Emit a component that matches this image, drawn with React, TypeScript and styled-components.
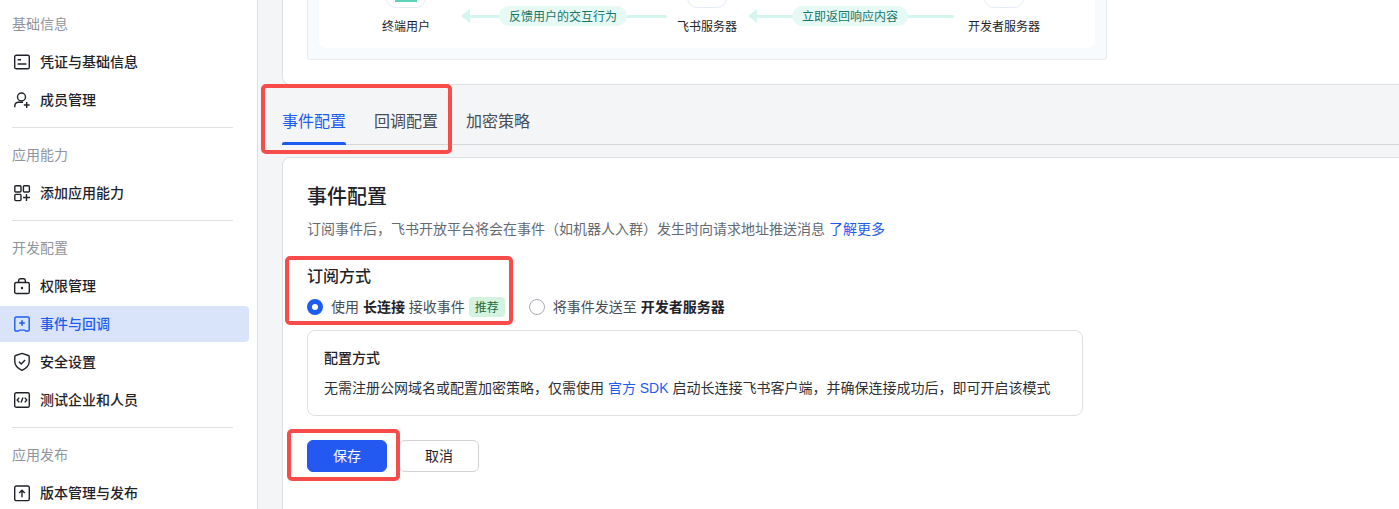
import React from "react";
import styled, { createGlobalStyle } from "styled-components";

const Global = createGlobalStyle`
  html, body { margin: 0; padding: 0; background: #fff; }
  body { font-family: "Liberation Sans", "Noto Sans CJK SC", sans-serif; color: #1f2329; }
  * { box-sizing: border-box; }
`;

const Page = styled.div`
  position: relative;
  display: flex;
  width: 1399px;
  height: 509px;
  overflow: hidden;
`;

const Sidebar = styled.aside`
  flex: none;
  width: 258px;
  height: 509px;
  padding-top: 13px;
  padding-right: 8px;
  background: #fff;
  border-right: 1px solid #dee0e3;
`;

const SectionTitle = styled.div`
  height: 22px;
  margin: 0 0 9px 12px;
  font-size: 14px;
  line-height: 22px;
  color: #8f959e;
`;

const NavList = styled.div`
  display: flex;
  flex-direction: column;
  gap: 2px;
`;

const NavItem = styled.div<{ $active?: boolean }>`
  display: flex;
  flex: none;
  align-items: center;
  gap: 10px;
  height: 36px;
  padding-left: 14px;
  border-radius: 0 4px 4px 0;
  font-size: 14px;
  font-weight: 500;
  color: ${(p) => (p.$active ? "#1d5cf0" : "#1f2329")};
  background: ${(p) => (p.$active ? "#d9e4fb" : "transparent")};
`;

const NavLabel = styled.span`
  padding-bottom: 2px;
`;

const Divider = styled.div`
  width: 221px;
  height: 1px;
  margin: 9px 0 16px 12px;
  background: #dee0e3;
`;

const Icon = styled.svg`
  flex: none;
  width: 16px;
  height: 16px;
  overflow: visible;
  fill: none;
  stroke: currentColor;
  stroke-width: 1.4;
`;

const Main = styled.main`
  flex: 1;
  min-width: 0;
  padding-left: 24px;
  background: #f4f5f7;
`;

const TopCard = styled.section`
  display: flex;
  align-items: flex-end;
  width: 1200px;
  height: 85px;
  padding: 0 0 24px 24px;
  background: #fff;
  border-left: 1px solid #dee0e3;
  border-bottom: 1px solid #dee0e3;
  border-bottom-left-radius: 8px;
`;

const DiagramFrame = styled.div`
  width: 800px;
  height: 60px;
  padding: 0 11px 11px;
  background: #f8fbfe;
  border: 1px solid #e6e9ee;
  border-top: 0;
  border-radius: 0 0 4px 4px;
`;

const DiagramCanvas = styled.div`
  display: flex;
  align-items: flex-start;
  height: 48px;
  padding-left: 32px;
  background: #fff;
  border-radius: 0 0 8px 8px;
`;

const Node = styled.div<{ $width: number }>`
  display: flex;
  flex: none;
  flex-direction: column;
  align-items: center;
  width: ${(p) => p.$width}px;
  margin-top: -32px;
`;

const NodeIcon = styled.div`
  position: relative;
  width: 40px;
  height: 40px;
  background: #fff;
  border: 1px solid #e6ebfa;
  border-radius: 10px;
`;

const NodeGlyph = styled.div`
  position: absolute;
  left: 8px;
  right: 8px;
  bottom: 5px;
  height: 10px;
  background: #5fd3b9;
`;

const NodeLabel = styled.div`
  margin-top: 10px;
  font-size: 12px;
  line-height: 18px;
  white-space: nowrap;
  color: #1f2329;
`;

const Arrow = styled.div<{ $gap?: number }>`
  position: relative;
  display: flex;
  flex: none;
  align-items: center;
  justify-content: center;
  width: 206px;
  height: 20px;
  margin-top: 6px;
  margin-left: ${(p) => p.$gap ?? 0}px;
  padding-right: 2px;
  &::before {
    content: "";
    position: absolute;
    left: 8px;
    right: 0;
    top: 9px;
    height: 3px;
    border-radius: 2px;
    background: #d5f5ef;
  }
  &::after {
    content: "";
    position: absolute;
    left: 0;
    top: 3px;
    border-style: solid;
    border-width: 7.5px 9px 7.5px 0;
    border-color: transparent #d5f5ef transparent transparent;
  }
`;

const Pill = styled.span`
  position: relative;
  z-index: 1;
  height: 20px;
  padding: 0 10px;
  border-radius: 10px;
  font-size: 12px;
  line-height: 22px;
  white-space: nowrap;
  color: #15766a;
  background: #e6f9f5;
`;

const Tabs = styled.nav`
  display: flex;
  gap: 28px;
  height: 60px;
  margin-bottom: 12px;
  border-bottom: 1px solid #d4d6da;
`;

const Tab = styled.div<{ $active?: boolean }>`
  position: relative;
  height: 60px;
  padding-top: 25px;
  font-size: 16px;
  line-height: 24px;
  color: ${(p) => (p.$active ? "#1d5cf0" : "#474c55")};
  ${(p) =>
    p.$active &&
    `&::after {
      content: "";
      position: absolute;
      left: 0;
      right: 0;
      bottom: 0;
      height: 3px;
      border-radius: 2px 2px 0 0;
      background: #1d5cf0;
    }`}
`;

const ConfigCard = styled.section`
  width: 1200px;
  height: 360px;
  padding: 25px 24px 24px;
  background: #fff;
  border: 1px solid #dee0e3;
  border-radius: 8px 0 0 0;
`;

const CardTitle = styled.h2`
  margin: 0;
  font-size: 20px;
  font-weight: 500;
  line-height: 28px;
  color: #1f2329;
`;

const Description = styled.p`
  margin: 7px 0 0;
  font-size: 14px;
  line-height: 22px;
  color: #646a73;
`;

const TextLink = styled.a`
  color: #1d5cf0;
`;

const SubTitle = styled.h3`
  margin: 25px 0 0;
  font-size: 16px;
  font-weight: 500;
  line-height: 24px;
  color: #1f2329;
`;

const RadioRow = styled.div`
  display: flex;
  align-items: center;
  height: 20px;
  margin-top: 8px;
`;

const RadioOption = styled.label<{ $gap?: number }>`
  display: flex;
  align-items: center;
  margin-left: ${(p) => p.$gap ?? 0}px;
  font-size: 14px;
  color: #474c55;
`;

const RadioText = styled.span`
  padding-bottom: 2px;
  white-space: pre;
`;

const RadioDot = styled.span<{ $checked?: boolean }>`
  flex: none;
  width: 16px;
  height: 16px;
  margin-right: 8px;
  border-radius: 50%;
  background: #fff;
  border: ${(p) => (p.$checked ? "5px solid #1d5cf0" : "1px solid #a8abb2")};
`;

const Strong = styled.strong`
  font-weight: 600;
  color: #1f2329;
`;

const Tag = styled.span`
  width: 36px;
  height: 20px;
  margin-left: 4px;
  border-radius: 4px;
  font-size: 12px;
  line-height: 22px;
  text-align: center;
  color: #1f6b43;
  background: #d3f3df;
`;

const NoteBox = styled.div`
  width: 776px;
  height: 86px;
  margin-top: 13px;
  padding: 16px 16px 0;
  border: 1px solid #dee0e3;
  border-radius: 8px;
`;

const NoteTitle = styled.div`
  font-size: 14px;
  font-weight: 500;
  line-height: 22px;
  color: #1f2329;
`;

const NoteText = styled.div`
  margin-top: 8px;
  font-size: 14px;
  line-height: 22px;
  color: #2b2f36;
  white-space: pre;
`;

const ButtonRow = styled.div`
  display: flex;
  gap: 12px;
  margin-top: 24px;
`;

const Button = styled.button<{ $primary?: boolean }>`
  width: 80px;
  height: 32px;
  padding: 0 0 2px;
  border-radius: 6px;
  font-family: inherit;
  font-size: 14px;
  color: ${(p) => (p.$primary ? "#fff" : "#1f2329")};
  background: ${(p) => (p.$primary ? "#2359f0" : "#fff")};
  border: 1px solid ${(p) => (p.$primary ? "#2359f0" : "#d0d3d6")};
`;

const Highlight = styled.div<{ $x: number; $y: number; $w: number; $h: number }>`
  position: absolute;
  left: ${(p) => p.$x}px;
  top: ${(p) => p.$y}px;
  width: ${(p) => p.$w}px;
  height: ${(p) => p.$h}px;
  border: 4px solid #f74c49;
  border-radius: 5px;
  pointer-events: none;
`;

const CredIcon = () => (
  <Icon viewBox="0 0 16 16">
    <rect x="0.7" y="1.2" width="14.6" height="13.6" rx="1.6" />
    <path d="M3.6 5.8H7M3.6 10h8.800" />
  </Icon>
);
const MemberIcon = () => (
  <Icon viewBox="0 0 16 16">
    <circle cx="7.500" cy="5" r="4" />
    <path d="M.8 15.200v-1.200c0-2.300 1.700-3.800 3.800-3.800H9M9.800 13h5.800M12.700 10v6" />
  </Icon>
);
const AppsIcon = () => (
  <Icon viewBox="0 0 16 16">
    <rect x="0.800" y="0.800" width="6.200" height="6.200" rx="1" />
    <rect x="9.400" y="0.800" width="6" height="6.200" rx="1" />
    <rect x="0.800" y="9.400" width="6.200" height="6.200" rx="1" />
    <path d="M9 12.500h7M12.500 9v7" />
  </Icon>
);
const BagIcon = () => (
  <Icon viewBox="0 0 16 16">
    <rect x="0.700" y="4.500" width="14.600" height="11" rx="1.600" />
    <path d="M4.700 4.500V2.400C4.700 1.300 5.400.7 6.400.7h3.200c1 0 1.700.6 1.700 1.700v2.100" />
    <circle cx="8" cy="10" r="1.200" fill="currentColor" stroke="none" />
  </Icon>
);
const EventIcon = () => (
  <Icon viewBox="0 0 16 16">
    <path d="M2.200 1h11.600c.8 0 1.400.6 1.400 1.400v11.400c0 .7-.5 1.200-1.200 1.200h-2.300c-.5 0-.8-.9-1.300-.9H5.600c-.5 0-.8.9-1.300.9H2c-.7 0-1.200-.5-1.200-1.200V2.400C.8 1.600 1.400 1 2.200 1z" />
    <path d="M5.200 7h5.600M8 4.200v5.600" strokeWidth="1.600" />
  </Icon>
);
const ShieldIcon = () => (
  <Icon viewBox="0 0 16 16">
    <path d="M8 -.6l6.400 2.100c.5.2.8.6.8 1.100v5.100c0 3.700-3.200 6.700-7.200 8.700C4 14.400.8 11.400.8 7.700V2.600c0-.5.3-.9.800-1.100L8-.6z" />
    <path d="M4.900 7.700l2.300 2.300 3.900-3.900" />
  </Icon>
);
const CodeIcon = () => (
  <Icon viewBox="0 0 16 16">
    <rect x="0.700" y="0.700" width="14.600" height="14.600" rx="1.600" />
    <path d="M5.300 5.600L3.200 8l2.100 2.400M10.700 5.600l2.100 2.400-2.100 2.400M9 5.400L7 10.600" />
  </Icon>
);
const PublishIcon = () => (
  <Icon viewBox="0 0 16 16">
    <rect x="0.700" y="1" width="14.600" height="14.600" rx="1.600" />
    <path d="M8 12.200V5.400M5.200 8L8 5.200 10.800 8" />
  </Icon>
);

export default function App() {
  return (
    <>
      <Global />
      <Page>
        <Sidebar>
          <SectionTitle>基础信息</SectionTitle>
          <NavList>
            <NavItem><CredIcon /><NavLabel>凭证与基础信息</NavLabel></NavItem>
            <NavItem><MemberIcon /><NavLabel>成员管理</NavLabel></NavItem>
          </NavList>
          <Divider />
          <SectionTitle>应用能力</SectionTitle>
          <NavList>
            <NavItem><AppsIcon /><NavLabel>添加应用能力</NavLabel></NavItem>
          </NavList>
          <Divider />
          <SectionTitle>开发配置</SectionTitle>
          <NavList>
            <NavItem><BagIcon /><NavLabel>权限管理</NavLabel></NavItem>
            <NavItem $active><EventIcon /><NavLabel>事件与回调</NavLabel></NavItem>
            <NavItem><ShieldIcon /><NavLabel>安全设置</NavLabel></NavItem>
            <NavItem><CodeIcon /><NavLabel>测试企业和人员</NavLabel></NavItem>
          </NavList>
          <Divider />
          <SectionTitle>应用发布</SectionTitle>
          <NavList>
            <NavItem><PublishIcon /><NavLabel>版本管理与发布</NavLabel></NavItem>
          </NavList>
        </Sidebar>
        <Main>
          <TopCard>
            <DiagramFrame>
              <DiagramCanvas>
                <Node $width={110}>
                  <NodeIcon><NodeGlyph /></NodeIcon>
                  <NodeLabel>终端用户</NodeLabel>
                </Node>
                <Arrow><Pill>反馈用户的交互行为</Pill></Arrow>
                <Node $width={80}>
                  <NodeIcon />
                  <NodeLabel>飞书服务器</NodeLabel>
                </Node>
                <Arrow $gap={1}><Pill>立即返回响应内容</Pill></Arrow>
                <Node $width={100}>
                  <NodeIcon />
                  <NodeLabel>开发者服务器</NodeLabel>
                </Node>
              </DiagramCanvas>
            </DiagramFrame>
          </TopCard>
          <Tabs>
            <Tab $active>事件配置</Tab>
            <Tab>回调配置</Tab>
            <Tab>加密策略</Tab>
          </Tabs>
          <ConfigCard>
            <CardTitle>事件配置</CardTitle>
            <Description>
              订阅事件后，飞书开放平台将会在事件（如机器人入群）发生时向请求地址推送消息 <TextLink>了解更多</TextLink>
            </Description>
            <SubTitle>订阅方式</SubTitle>
            <RadioRow>
              <RadioOption>
                <RadioDot $checked />
                <RadioText>使用 <Strong>长连接</Strong> 接收事件</RadioText>
                <Tag>推荐</Tag>
              </RadioOption>
              <RadioOption $gap={24}>
                <RadioDot />
                <RadioText>将事件发送至 <Strong>开发者服务器</Strong></RadioText>
              </RadioOption>
            </RadioRow>
            <NoteBox>
              <NoteTitle>配置方式</NoteTitle>
              <NoteText>
                无需注册公网域名或配置加密策略，仅需使用 <TextLink>官方 SDK</TextLink> 启动长连接飞书客户端，并确保连接成功后，即可开启该模式
              </NoteText>
            </NoteBox>
            <ButtonRow>
              <Button $primary>保存</Button>
              <Button>取消</Button>
            </ButtonRow>
          </ConfigCard>
        </Main>
        <Highlight $x={261} $y={84} $w={191} $h={70} />
        <Highlight $x={285} $y={256} $w={228} $h={69} />
        <Highlight $x={287} $y={429} $w={113} $h={52} />
      </Page>
    </>
  );
}
